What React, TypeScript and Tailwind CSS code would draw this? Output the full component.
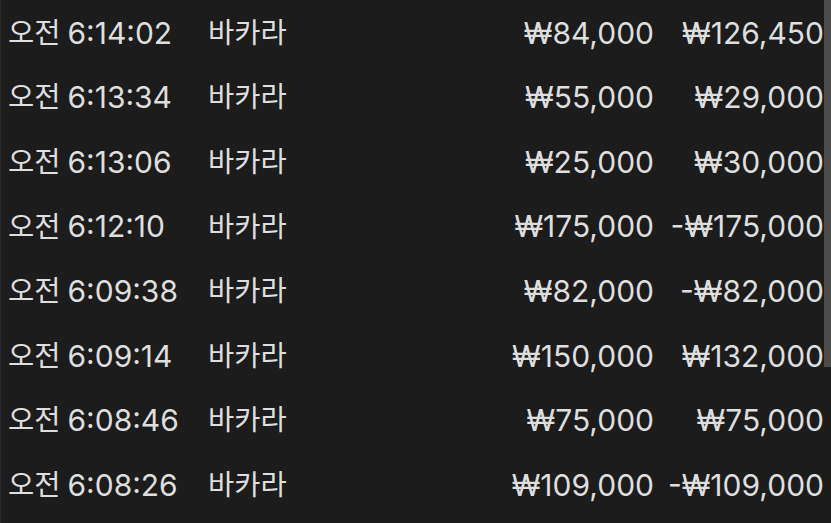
import React from 'react';

type Bet = {
  period: string;
  time: string;
  game: string;
  amount: string;
  result: string;
};

const bets: Bet[] = [
  { period: '오전', time: '6:14:02', game: '바카라', amount: '₩84,000', result: '₩126,450' },
  { period: '오전', time: '6:13:34', game: '바카라', amount: '₩55,000', result: '₩29,000' },
  { period: '오전', time: '6:13:06', game: '바카라', amount: '₩25,000', result: '₩30,000' },
  { period: '오전', time: '6:12:10', game: '바카라', amount: '₩175,000', result: '-₩175,000' },
  { period: '오전', time: '6:09:38', game: '바카라', amount: '₩82,000', result: '-₩82,000' },
  { period: '오전', time: '6:09:14', game: '바카라', amount: '₩150,000', result: '₩132,000' },
  { period: '오전', time: '6:08:46', game: '바카라', amount: '₩75,000', result: '₩75,000' },
  { period: '오전', time: '6:08:26', game: '바카라', amount: '₩109,000', result: '-₩109,000' },
];

export default function App() {
  return (
    <div
      className="flex w-[831px] h-[523px] overflow-hidden bg-[#1c1c1c] border-l border-[#2a2a2a] text-[#dedede] text-[30px]"
      style={{ fontFamily: 'Inter, "Noto Sans CJK KR", sans-serif' }}
    >
      {/* History rows */}
      <div className="flex-1 flex flex-col pt-[1px]">
        {bets.map((bet, idx) => (
          <div key={idx} className="flex items-center h-[64.57px] whitespace-nowrap">
            <span className="w-[207px] pl-[7px] flex items-center gap-[7px]">
              <span className="text-[28.5px]">{bet.period}</span>
              <span>{bet.time}</span>
            </span>
            <span className="text-[28.5px]">{bet.game}</span>
            <span className="flex-1 text-right">{bet.amount}</span>
            <span className="w-[170px] text-right">{bet.result}</span>
          </div>
        ))}
      </div>

      {/* Scrollbar */}
      <div className="w-[7px] shrink-0">
        <div className="h-[367px] bg-[#4b4b4b]" />
      </div>
    </div>
  );
}
